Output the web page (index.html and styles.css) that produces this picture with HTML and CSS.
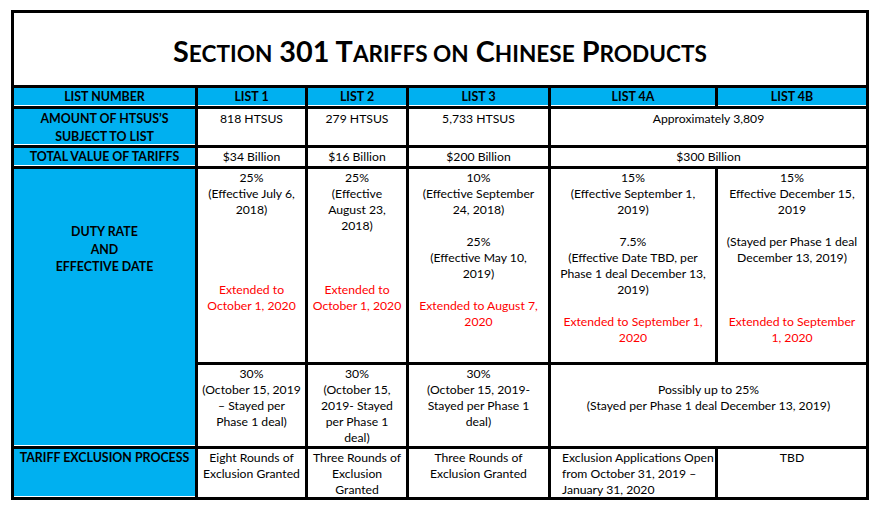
FILE: index.html
```html
<!DOCTYPE html>
<html lang="en">
<head>
<meta charset="utf-8">
<title>Section 301 Tariffs on Chinese Products</title>
<link rel="stylesheet" href="styles.css">
</head>
<body>
<div class="sheet">
  <div class="title"><span>S<span class="sc">ECTION</span> 301 T<span class="sc">ARIFFS ON</span> C<span class="sc">HINESE</span> P<span class="sc">RODUCTS</span></span></div>

  <div class="hd">LIST NUMBER</div>
  <div class="hd">LIST 1</div>
  <div class="hd">LIST 2</div>
  <div class="hd">LIST 3</div>
  <div class="hd">LIST 4A</div>
  <div class="hd">LIST 4B</div>

  <div class="lbl lbl-amount">AMOUNT OF HTSUS’S<br>SUBJECT TO LIST</div>
  <div class="c c-amount">818 HTSUS</div>
  <div class="c c-amount">279 HTSUS</div>
  <div class="c c-amount">5,733 HTSUS</div>
  <div class="c c-amount span2">Approximately 3,809</div>

  <div class="lbl">TOTAL VALUE OF TARIFFS</div>
  <div class="c">$34 Billion</div>
  <div class="c">$16 Billion</div>
  <div class="c">$200 Billion</div>
  <div class="c span2">$300 Billion</div>

  <div class="lbl lbl-duty">DUTY RATE<br>AND<br>EFFECTIVE DATE</div>
  <div class="c">25%<br>(Effective July 6,<br>2018)<br><br><br><br><br><span class="red">Extended to<br>October 1, 2020</span></div>
  <div class="c">25%<br>(Effective<br>August 23,<br>2018)<br><br><br><br><span class="red">Extended to<br>October 1, 2020</span></div>
  <div class="c">10%<br>(Effective September<br>24, 2018)<br><br>25%<br>(Effective May 10,<br>2019)<br><br><span class="red">Extended to August 7,<br>2020</span></div>
  <div class="c">15%<br>(Effective September 1,<br>2019)<br><br>7.5%<br>(Effective Date TBD, per<br>Phase 1 deal December 13,<br>2019)<br><br><span class="red">Extended to September 1,<br>2020</span></div>
  <div class="c">15%<br>Effective December 15,<br>2019<br><br>(Stayed per Phase 1 deal<br>December 13, 2019)<br><br><br><br><span class="red">Extended to September<br>1, 2020</span></div>

  <div class="c">30%<br>(October 15, 2019<br>– Stayed per<br>Phase 1 deal)</div>
  <div class="c">30%<br>(October 15,<br>2019- Stayed<br>per Phase 1<br>deal)</div>
  <div class="c">30%<br>(October 15, 2019-<br>Stayed per Phase 1<br>deal)</div>
  <div class="c span2"><br>Possibly up to 25%<br>(Stayed per Phase 1 deal December 13, 2019)</div>

  <div class="lbl">TARIFF EXCLUSION PROCESS</div>
  <div class="c">Eight Rounds of<br>Exclusion Granted</div>
  <div class="c">Three Rounds of<br>Exclusion<br>Granted</div>
  <div class="c">Three Rounds of<br>Exclusion Granted</div>
  <div class="c left">Exclusion Applications Open<br>from October 31, 2019 –<br>January 31, 2020</div>
  <div class="c">TBD</div>
</div>
</body>
</html>
```

FILE: styles.css
```css
* { box-sizing: border-box; }

html, body {
  margin: 0;
  background: #fff;
}

body {
  padding: 10px 0 0 11px;
  font-family: Lato, "Liberation Sans", sans-serif;
  font-size: 12.2px;
  color: #000;
}

.sheet {
  width: 858px;
  display: grid;
  grid-template-columns: 181px 107px 98px 139px 164px 148px;
  grid-template-rows: 72px 18px 36px 18px 193px 81px 48px;
  gap: 3px;
  padding: 3px;
  background: #000;
}

.title {
  grid-column: 1 / -1;
  background: #fff;
  display: flex;
  align-items: center;
  justify-content: center;
  font-weight: 700;
  font-size: 28.8px;
  padding-top: 3px;
}

.title .sc {
  font-size: 22.6px;
}

.hd {
  background: #00b0f0;
  border-bottom: 1px solid #fff;
  font-weight: 700;
  font-size: 12.4px;
  text-align: center;
  line-height: 16px;
  padding-top: 1px;
  white-space: nowrap;
}

.lbl {
  background: #00b0f0;
  border-bottom: 1px solid #fff;
  font-weight: 700;
  font-size: 12.4px;
  text-align: center;
  line-height: 16px;
  padding-top: 1px;
  white-space: nowrap;
}

.lbl-amount {
  line-height: 17.5px;
  padding-top: 1px;
}

.lbl-duty {
  grid-row: span 2;
  line-height: 17.5px;
  padding-top: 54px;
}

.c {
  background: #fff;
  text-align: center;
  line-height: 16px;
  padding-top: 1px;
  white-space: nowrap;
}

.c-amount {
  padding-top: 2px;
}

.span2 {
  grid-column: span 2;
}

.left {
  text-align: left;
  padding-left: 11px;
}

.red {
  color: #ff0000;
}
```
